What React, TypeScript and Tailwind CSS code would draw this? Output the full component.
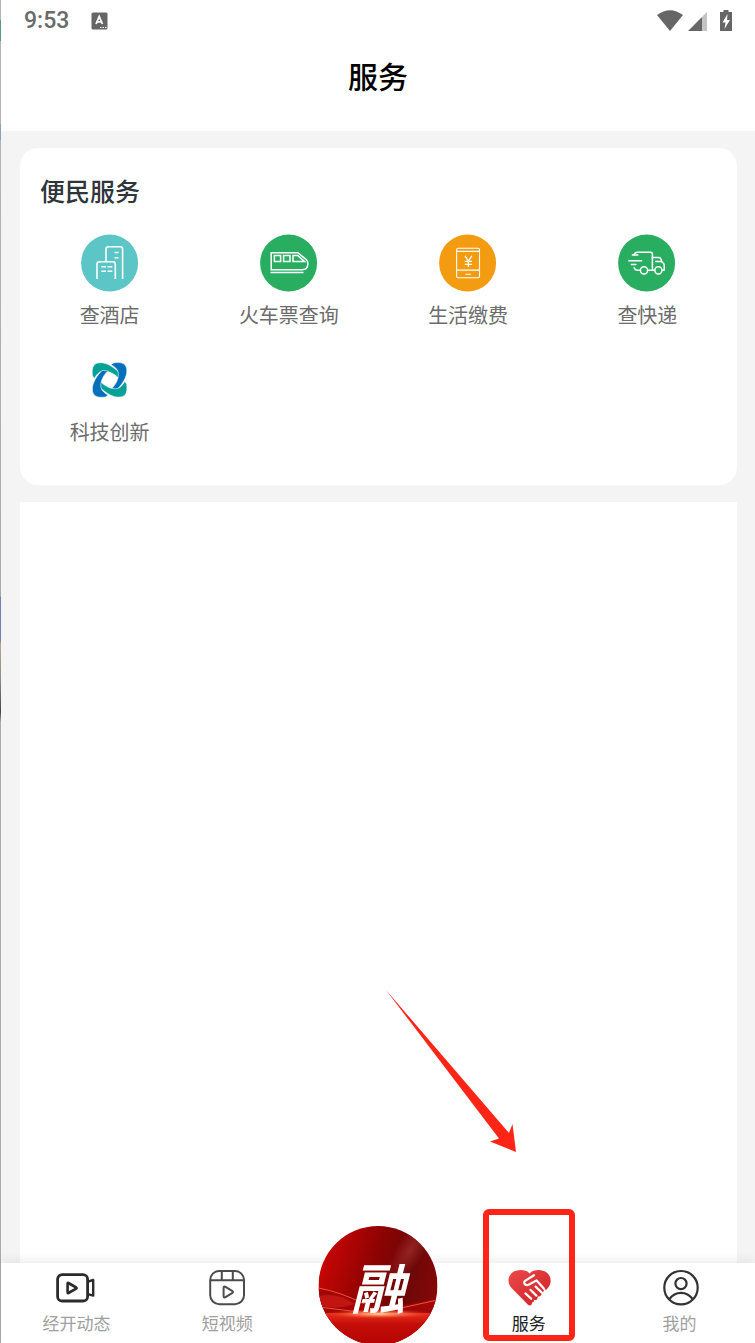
import type { ReactNode } from "react";

const HotelIcon = () => (
  <svg viewBox="0 0 58 58" className="size-[58px]" fill="none" stroke="#fff" strokeWidth="1.6" aria-hidden="true">
    <circle cx="28.6" cy="29" r="28.5" fill="#5bc6c5" stroke="none" />
    <path d="M25 27.500V15.200q0-2.500 2.500-2.500h11.600q2.500 0 2.500 2.500V45" />
    <path d="M16 45V30.200q0-2.500 2.500-2.500h13.300q2.500 0 2.500 2.500V45" />
    <path d="M33.500 18.500h4M33.500 23.700h4M20.300 32.800h4.600M26.500 32.800h4.800M20.300 37.200h4.600M26.500 37.200h4.800" />
  </svg>
);

const TrainIcon = () => (
  <svg viewBox="0 0 58 58" className="size-[58px]" fill="none" stroke="#fff" strokeWidth="1.5" aria-hidden="true">
    <circle cx="28.6" cy="29" r="28.5" fill="#29ae61" stroke="none" />
    <path d="M11.200 18.700h26.600l8.200 6.600q1.800 1.600 1.800 4v.8q0 5.600-5.400 5.600H11.200z" />
    <path d="M14.400 21.600h6.200v5.800h-6.200zM23.600 21.600h6.400v5.800h-6.400zM33 21.600h4.800l6.600 5.800H33z" />
    <path d="M10.500 38.600h33" />
  </svg>
);

const PhonePayIcon = () => (
  <svg viewBox="0 0 58 58" className="size-[58px]" fill="none" stroke="#fff" strokeWidth="1.1" aria-hidden="true">
    <circle cx="28.6" cy="29" r="28.5" fill="#f39c12" stroke="none" />
    <rect x="17.6" y="14.2" width="22.9" height="29.6" rx="1.6" />
    <path d="M17.600 17.400h22.900M17.600 36.100h22.900M26.400 40.200h5.400" />
    <path d="M26 21.800l3.400 5.200 3.400-5.200M29.400 27v6M25.800 27.400h7.200M25.800 30.300h7.200" strokeWidth="1.3" />
  </svg>
);

const TruckIcon = () => (
  <svg viewBox="0 0 58 58" className="size-[58px]" fill="none" stroke="#fff" strokeWidth="1.5" strokeLinecap="round" strokeLinejoin="round" aria-hidden="true">
    <circle cx="28.6" cy="29" r="28.5" fill="#29ae61" stroke="none" />
    <path d="M16 20.3q1.2-2 3.4-2h13.2q1.8 0 1.8 1.8v16.2" />
    <path d="M14.4 21h5.4M10.8 26.8h12.8M13.4 30.6h4.4M16.2 33.8q.8 2.5 3.2 2.5h2.8" />
    <path d="M29.8 36.3h6.8M34.4 23.6h6.4q1.6 0 2.2 1.6l1.2 3.2q2 .6 2 2.6v5.3h-2" />
    <path d="M37.6 27.4h6" />
    <circle cx="26" cy="36.3" r="3.6" />
    <circle cx="40.4" cy="36.3" r="3.6" />
  </svg>
);

const petal = "M-17-4C-18.200-13-16-17.200-9-17.200C-3-17.200 4-13 9.500-7.500L9-1.800C4-6.800-2-9.600-8-8.600C-11-7.600-13.500-4.600-15.200-1.500Z";

const TechIcon = () => (
  <svg viewBox="0 0 58 58" className="size-[58px]" aria-hidden="true">
    <g transform="translate(28.6 28.9)" stroke="#fff" strokeWidth=".5">
      <path d={petal} fill="#03a196" />
      <path d={petal} fill="#0470bb" transform="rotate(90)" />
      <path d={petal} fill="#03a196" transform="rotate(180)" />
      <path d={petal} fill="#0470bb" transform="rotate(270)" />
    </g>
  </svg>
);

const VideoIcon = () => (
  <svg viewBox="0 0 40 40" className="size-10" fill="none" stroke="#2b2b2b" strokeWidth="2.8" strokeLinejoin="round" aria-hidden="true">
    <rect x="1.6" y="6.6" width="30" height="26.4" rx="4.6" />
    <path d="M11.6 15.4v9.2q0 .8.8.4l7.8-4.4q.8-.6 0-1.1l-7.8-4.5q-.8-.4-.8.4z" strokeWidth="2.6" />
    <path d="M32 13.6l5.200-1.600v15.600l-5.200-1.400" strokeWidth="2.4" />
  </svg>
);

const ReelsIcon = () => (
  <svg viewBox="0 0 40 40" className="size-10" fill="none" stroke="#4c4c4c" strokeWidth="2" strokeLinejoin="round" aria-hidden="true">
    <rect x="3.2" y="3" width="33.8" height="33.2" rx="9" />
    <path d="M3.6 12.2h33M14.8 3v9M25.8 3v9" />
    <path d="M16.6 20v8q0 2.2 1.9 1.2l6.6-4q1.8-1.2 0-2.4l-6.6-4q-1.9-1-1.9 1.2z" />
  </svg>
);

const HeartHandIcon = () => (
  <svg viewBox="0 0 44 40" className="h-10 w-11" aria-hidden="true">
    <defs>
      <linearGradient id="heart" x1="0" y1="0" x2="1" y2="1">
        <stop offset="0" stopColor="#ea4a4a" />
        <stop offset="1" stopColor="#cf1f24" />
      </linearGradient>
    </defs>
    <path
      fill="url(#heart)"
      d="M22.6 5.4C18.6 1 10.2.8 5.4 4.6C.4 8.8.2 15.4 4.8 20.2L20.8 36.4Q23 38.6 25.2 36.4L40.2 20.8C44.8 16 45 8.8 39.6 4.6C34.6.8 26.8 1 22.6 5.4Z"
    />
    <g fill="none" stroke="#fff" strokeWidth="2.2" strokeLinecap="round" strokeLinejoin="round">
      <path d="M27 7.200L18.400 12.600C15.600 14.600 18.200 18.200 21.600 16.800L29.600 12.400L36.800 20.600" />
      <path d="M18.400 25.400l5.800 5.400M23.400 21.800l6 5.800M28.600 18.600l6 5.800" />
    </g>
    <path fill="#fff" d="M36.4 20.4l3.4 1.8L25 38.6l-.8-1.400l1.400-3.200q1.800 .4 1.200-2.200q4.400 1.200 3.800-3.400q4.600 1 3.900-3.600q3.300-.8 1.900-4.400z" />
  </svg>
);

const UserIcon = () => (
  <svg viewBox="0 0 40 40" className="size-10" fill="none" stroke="#333" strokeWidth="2.2" aria-hidden="true">
    <circle cx="21" cy="19.7" r="16.7" />
    <circle cx="21" cy="15.6" r="5.6" />
    <path d="M9.400 31.200Q13.800 24.800 21 24.800T32.600 31.200" />
  </svg>
);

const BrandBadge = () => (
  <span className="absolute -bottom-0.5 left-1/2 flex size-[119px] -translate-x-1/2 items-center justify-center overflow-hidden rounded-full">
    <svg viewBox="0 0 119 119" className="absolute inset-0 size-full" aria-hidden="true">
      <defs>
        <linearGradient id="sky" x1="0" y1=".2" x2="1" y2=".5">
          <stop offset="0" stopColor="#d00505" />
          <stop offset=".45" stopColor="#8e0303" />
          <stop offset=".75" stopColor="#6c0707" />
          <stop offset="1" stopColor="#850808" />
        </linearGradient>
        <linearGradient id="floor" x1="0" y1="0" x2="0" y2="1">
          <stop offset="0" stopColor="#e8301c" />
          <stop offset=".35" stopColor="#c40d08" />
          <stop offset="1" stopColor="#b40303" />
        </linearGradient>
        <radialGradient id="beam">
          <stop offset="0" stopColor="#b84040" stopOpacity=".5" />
          <stop offset="1" stopColor="#b84040" stopOpacity="0" />
        </radialGradient>
        <radialGradient id="glow">
          <stop offset="0" stopColor="#ffd9a0" />
          <stop offset=".5" stopColor="#ff6a45" stopOpacity=".7" />
          <stop offset="1" stopColor="#e02010" stopOpacity="0" />
        </radialGradient>
      </defs>
      <rect width="119" height="119" fill="url(#sky)" />
      <ellipse cx="92" cy="24" rx="14" ry="40" fill="url(#beam)" transform="rotate(32 92 24)" />
      <path d="M0 62Q22 66 44 78Q80 84 119 72V90H0Z" fill="#a00707" />
      <path d="M0 70Q20 66 36 78Q20 84 0 80Z" fill="#c01510" />
      <path d="M0 62Q22 66 46 78M119 74Q92 80 64 86M0 81Q24 84 50 87" fill="none" stroke="#ee5338" strokeWidth="1" />
      <rect y="87" width="119" height="32" fill="url(#floor)" />
      <ellipse cx="60" cy="88" rx="56" ry="5" fill="url(#glow)" />
    </svg>
    <span className="relative text-[54px] leading-none font-bold text-white italic">融</span>
  </span>
);

// Red frame and arrow pointing at the highlighted tab
const Callout = () => (
  <span className="pointer-events-none absolute bottom-0.5 left-1/2 h-[132px] w-[92px] -translate-x-1/2 rounded-md border-6 border-[#ff2516]">
    <svg viewBox="0 0 132 164" className="absolute right-[53px] bottom-[182px] h-[164px] w-[132px]" aria-hidden="true">
      <path d="M2 1L125 144L128.500 135L132 163L106 152.500L115 149.500Z" fill="#ff2516" />
    </svg>
  </span>
);

const services: { label: string; icon: ReactNode }[] = [
  { label: "查酒店", icon: <HotelIcon /> },
  { label: "火车票查询", icon: <TrainIcon /> },
  { label: "生活缴费", icon: <PhonePayIcon /> },
  { label: "查快递", icon: <TruckIcon /> },
  { label: "科技创新", icon: <TechIcon /> },
];

const tabs: { label: string; icon?: ReactNode; active?: boolean }[] = [
  { label: "经开动态", icon: <VideoIcon /> },
  { label: "短视频", icon: <ReelsIcon /> },
  { label: "融" },
  { label: "服务", icon: <HeartHandIcon />, active: true },
  { label: "我的", icon: <UserIcon /> },
];

function StatusBar() {
  return (
    <div className="flex h-[41px] items-center justify-between pr-5 pl-[23px] text-[#6a6a6a]">
      <div className="flex items-center gap-[22px]">
        <span className="font-['Roboto',sans-serif] text-[23px] leading-6 font-medium">9:53</span>
        <svg viewBox="0 0 17 18" className="h-[18px] w-[17px]" aria-hidden="true">
          <rect x=".5" y=".5" width="16" height="17" rx="1.5" fill="#666" />
          <path d="M5 12L8.200 4.500L11.400 12M6.200 9.800H10.200" fill="none" stroke="#fff" strokeWidth="1.8" />
          <path d="M9 15.500h1.500M11.500 15.500h1.500M14 15.500h1.500" stroke="#fff" strokeWidth="1.2" />
        </svg>
      </div>
      <svg viewBox="0 0 78 24" className="h-6 w-[78px]" fill="#666" aria-hidden="true">
        <path d="M0 6Q13-3.500 26 6L13 22Z" />
        <path d="M31 22L45 8V22Z" />
        <path d="M45 8L50 3V22H45Z" fill="#c4c4c4" />
        <path d="M66.500 1h5v2h3.500v19H63V3h3.500Z" />
        <path d="M70.500 5L65.500 13.500H68.500L67.500 20L73 11H70Z" fill="#fff" />
      </svg>
    </div>
  );
}

export default function App() {
  return (
    <div className="flex min-h-screen overflow-hidden bg-[#f4f4f4] font-['Noto_Sans_CJK_SC',sans-serif]">
      {/* Sliver of the desktop behind the emulator window */}
      <div className="w-px shrink-0 bg-[linear-gradient(#b4b4b4_20px,#559a7d_20px,#559a7d_41px,#b4b4b4_41px,#b4b4b4_124px,#86a5b0_124px,#86a5b0_140px,#b4b4b4_140px,#aaa_596px,#7183ad_597px,#7183ad_640px,#b5a58c_645px,#8b8b8b_680px,#444_712px,#aaa_722px)]" />
      <div className="flex min-w-0 flex-1 flex-col">
        <header className="bg-white pb-[22px]">
          <StatusBar />
          <h1 className="text-center text-[30px] leading-[68px] font-medium text-black">服务</h1>
        </header>

        <main className="flex flex-1 flex-col gap-[17px] pt-[17px] pr-[18px] pl-[19px]">
          <section className="rounded-[18px] bg-white pt-6 pb-[39px]">
            <h2 className="px-5 text-[25px] leading-9 font-medium text-[#30353c]">便民服务</h2>
            <div className="mt-[26px] grid grid-cols-4 gap-y-[22px]">
              {services.map((s) => (
                <a key={s.label} href="#" className="flex flex-col items-center gap-[9px]">
                  {s.icon}
                  <span className="text-[20px] leading-7 text-[#6c6c6c]">{s.label}</span>
                </a>
              ))}
            </div>
          </section>
          <section className="flex-1 bg-white" />
        </main>

        <nav className="relative grid grid-cols-5 bg-white shadow-[0_-3px_10px_rgba(0,0,0,0.07)]">
          {tabs.map((t) => (
            <a
              key={t.label}
              href="#"
              aria-current={t.active ? "page" : undefined}
              className={`relative flex flex-col items-center gap-[3px] pt-[5px] pb-2 text-[17px] leading-6 ${
                t.active ? "text-[#222]" : "text-[#a0a0a0]"
              }`}
            >
              {t.icon ? (
                <>
                  {t.icon}
                  <span>{t.label}</span>
                </>
              ) : (
                <BrandBadge />
              )}
              {t.active && <Callout />}
            </a>
          ))}
        </nav>
      </div>
    </div>
  );
}
